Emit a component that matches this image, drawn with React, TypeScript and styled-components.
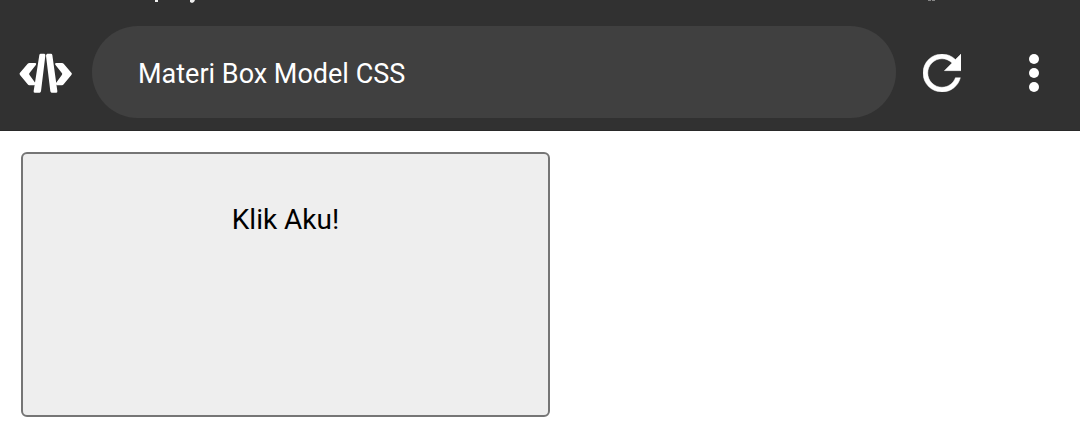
import styled, { createGlobalStyle } from "styled-components";

const GlobalStyle = createGlobalStyle`
  *, *::before, *::after { box-sizing: border-box; }
  body {
    margin: 0;
    background: #ffffff;
    font-family: Roboto, "Liberation Sans", sans-serif;
  }
`;

const Header = styled.header`
  background: #313131;
`;

const StatusEdge = styled.div`
  display: flex;
  justify-content: space-between;
  height: 26px;
  padding: 0 144px 0 154px;

  svg { display: block; }
`;

const Toolbar = styled.div`
  display: flex;
  align-items: center;
  padding: 0 0 12px 19px;
  border-bottom: 1px solid #292929;
`;

const Logo = styled.svg`
  flex: none;
  width: 53px;
  height: 42px;
  margin-right: 20px;
  padding-top: 2px;
`;

const TitleField = styled.input`
  flex: 1;
  min-width: 0;
  height: 92px;
  padding: 4px 46px 0;
  border: 0;
  border-radius: 46px;
  outline: 0;
  background: #404040;
  color: #ffffff;
  font: 400 27px/36px Roboto, "Liberation Sans", sans-serif;
`;

const IconButton = styled.button`
  display: flex;
  flex: none;
  align-items: center;
  justify-content: center;
  width: 92px;
  height: 92px;
  padding: 2px 0 0;
  border: 0;
  background: none;
  color: #ffffff;
  cursor: pointer;
`;

const Main = styled.main`
  padding: 21px;
`;

const BoxButton = styled.button`
  display: flex;
  align-items: flex-start;
  justify-content: center;
  width: 529px;
  max-width: 100%;
  height: 265px;
  padding: 48px;
  border: 2px solid #757575;
  border-radius: 6px;
  background: #eeeeee;
  color: #000000;
  font: 400 28px/36px Roboto, "Liberation Sans", sans-serif;
  cursor: pointer;
`;

export default function App() {
  return (
    <>
      <GlobalStyle />
      <Header>
        <StatusEdge aria-hidden="true">
          <svg width="42" height="4" viewBox="0 0 42 4" fill="#eeeeee">
            <path d="M1 0h3v2H1zM36 0h5l-1 2-2 1-2-1z" />
          </svg>
          <svg width="8" height="2" viewBox="0 0 8 2" fill="#858585">
            <path d="M0 0h3v1H0zM4 0h3v1H4z" />
          </svg>
        </StatusEdge>
        <Toolbar>
          <Logo viewBox="57 53 159 120" fill="#ffffff" role="img" aria-label="Code editor">
            <path d="M60 112 83 85Q85 83 88 83H106Q110 84 108 88L88 114Q87 116 88 118L106 143Q107 149 103 150H88Q85 150 83 147L60 119Q57 115 60 112Z" />
            <path d="M214 112 191 85Q189 83 186 83H168Q164 84 166 88L186 114Q187 116 186 118L168 143Q167 149 171 150H186Q189 150 191 147L214 119Q217 115 214 112Z" />
            <path d="M122 55H133Q137 56 136 61L123 168Q122 172 119 172H104Q100 172 101 167L118 59Q119 55 122 55Z" />
            <path d="M142 55H153Q156 55 157 59L172 167Q173 172 169 172H155Q152 172 151 168L138 61Q138 56 142 55Z" />
          </Logo>
          <TitleField aria-label="Page title" defaultValue="Materi Box Model CSS" readOnly />
          <IconButton type="button" aria-label="Reload">
            <svg width="38" height="38" viewBox="4 4 16 16" fill="currentColor">
              <path d="M17.65 6.35C16.2 4.9 14.21 4 12 4c-4.42 0-7.99 3.58-7.99 8s3.57 8 7.99 8c3.73 0 6.84-2.55 7.73-6h-2.08c-.82 2.33-3.04 4-5.65 4-3.31 0-6-2.69-6-6s2.69-6 6-6c1.66 0 3.14.69 4.22 1.78L13 11h7V4l-2.35 2.35z" stroke="currentColor" strokeWidth=".2" />
            </svg>
          </IconButton>
          <IconButton type="button" aria-label="More options">
            <svg width="10" height="38" viewBox="0 0 10 38" fill="currentColor">
              <circle cx="5" cy="5" r="5" />
              <circle cx="5" cy="19" r="5" />
              <circle cx="5" cy="33" r="5" />
            </svg>
          </IconButton>
        </Toolbar>
      </Header>
      <Main>
        <BoxButton type="button">Klik Aku!</BoxButton>
      </Main>
    </>
  );
}
